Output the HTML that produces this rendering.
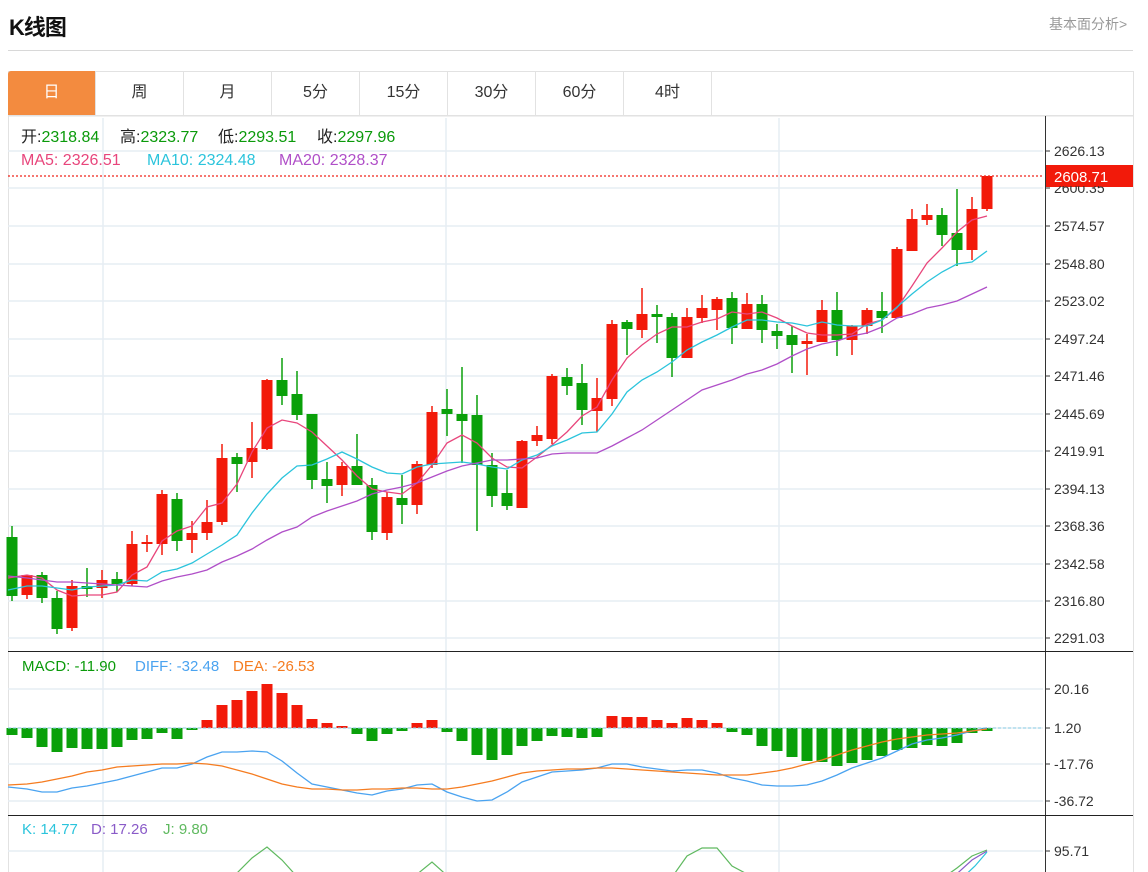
<!DOCTYPE html>
<html><head><meta charset="utf-8"><style>
body{margin:0;background:#fff;font-family:"Liberation Sans","Noto Sans CJK SC",sans-serif;}
.wrap{position:relative;width:1148px;height:872px;overflow:hidden}
h1{position:absolute;left:9px;top:10px;margin:0;font-size:22px;font-weight:bold;color:#111;letter-spacing:-1px}
.more{position:absolute;left:1049px;top:14px;font-size:14px;color:#999}
.hr{position:absolute;left:8px;top:50px;width:1125px;height:1px;background:#d8d8d8}
.box{position:absolute;left:8px;top:71px;width:1124px;height:810px;border:1px solid #e2e2e2;border-bottom:none}
.tabs{position:absolute;left:8px;top:71px;height:44px;display:flex;border-bottom:1px solid #e2e2e2;width:1125px}
.tabs div{width:87px;border-right:1px solid #e2e2e2;text-align:center;line-height:44px;font-size:16px;color:#333}
.tabs div.on{background:#f38b3f;color:#fff;border-radius:3px 0 0 0}
svg{position:absolute;left:0;top:0}
</style></head><body><div class="wrap">
<h1>K线图</h1><div class="more">基本面分析&gt;</div><div class="hr"></div>
<div class="box"></div>
<div class="tabs"><div class="on">日</div><div>周</div><div>月</div><div>5分</div><div>15分</div><div>30分</div><div>60分</div><div>4时</div></div>
<svg id="s" width="1148" height="872" font-family="Liberation Sans, Noto Sans CJK SC, sans-serif">
<g id="grid" stroke="#e6edf3" stroke-width="1.5"></g>
<line x1="8" y1="116" x2="1133" y2="116" stroke="#e2e2e2"/>
<line x1="1045.5" y1="116" x2="1045.5" y2="872" stroke="#333"/>
<line x1="8" y1="651.5" x2="1133" y2="651.5" stroke="#222"/>
<line x1="8" y1="815.5" x2="1133" y2="815.5" stroke="#222"/>
<g id="c"></g>
<line x1="8" y1="176" x2="1043" y2="176" stroke="#f0241a" stroke-width="1.2" stroke-dasharray="2,2"/>
<rect x="1046" y="165" width="87" height="22" fill="#f21a0a"/>
<g font-size="14" fill="#333">
<text x="1054" y="156">2626.13</text><text x="1054" y="193">2600.35</text>
<text x="1054" y="231">2574.57</text><text x="1054" y="269">2548.80</text>
<text x="1054" y="306">2523.02</text><text x="1054" y="344">2497.24</text>
<text x="1054" y="381">2471.46</text><text x="1054" y="419">2445.69</text>
<text x="1054" y="456">2419.91</text><text x="1054" y="494">2394.13</text>
<text x="1054" y="531">2368.36</text><text x="1054" y="569">2342.58</text>
<text x="1054" y="606">2316.80</text><text x="1054" y="643">2291.03</text>
<text x="1054" y="694">20.16</text><text x="1054" y="733">1.20</text>
<text x="1054" y="769">-17.76</text><text x="1054" y="806">-36.72</text>
<text x="1054" y="856">95.71</text>
</g>
<rect x="1046" y="176" width="87" height="10" fill="#f21a0a"/>
<text x="1054" y="182" font-size="15" fill="#fff">2608.71</text>
<g font-size="16">
<text x="21" y="142" fill="#222">开:<tspan fill="#0a9a0a">2318.84</tspan></text>
<text x="120" y="142" fill="#222">高:<tspan fill="#0a9a0a">2323.77</tspan></text>
<text x="218" y="142" fill="#222">低:<tspan fill="#0a9a0a">2293.51</tspan></text>
<text x="317" y="142" fill="#222">收:<tspan fill="#0a9a0a">2297.96</tspan></text>
<text x="21" y="165" fill="#e8467c">MA5: 2326.51</text>
<text x="147" y="165" fill="#2bc4dc">MA10: 2324.48</text>
<text x="279" y="165" fill="#b04fc8">MA20: 2328.37</text>
</g>
<g font-size="15">
<text x="22" y="671" fill="#0a9a0a">MACD: -11.90</text>
<text x="135" y="671" fill="#4aa3f0">DIFF: -32.48</text>
<text x="233" y="671" fill="#f57c20">DEA: -26.53</text>
<text x="22" y="834" fill="#2bc4dc">K: 14.77</text>
<text x="91" y="834" fill="#8a5bc8">D: 17.26</text>
<text x="163" y="834" fill="#5fb95f">J: 9.80</text>
</g>
</svg>
<script>
var ns="http://www.w3.org/2000/svg",C=document.getElementById('c'),G=document.getElementById('grid');
function el(t,a,p){var e=document.createElementNS(ns,t);for(var k in a)e.setAttribute(k,a[k]);(p||C).appendChild(e);return e;}
[151,188,226,264,301,339,376,414,451,489,526,564,601,638,689,728,764,801,851].forEach(function(y){el('line',{x1:8,x2:1043,y1:y,y2:y},G);
el('line',{x1:1045,x2:1050,y1:y,y2:y,stroke:'#333','stroke-width':1},G);});
[103,446,779].forEach(function(x){el('line',{x1:x,x2:x,y1:118,y2:872},G);});
var K=[['g',537,596,526,601],['r',575,595,575,599],['g',575,598,572,603],['g',598,629,591,634],['r',586,628,580,631],['g',586,589,568,597],['r',580,588,570,598],['g',579,584,572,592],['r',544,584,531,586],['r',542,544,535,552],['r',494,544,490,555],['g',499,541,493,551],['r',533,540,521,553],['r',522,533,500,540],['r',458,522,444,525],['g',457,464,453,492],['r',448,462,422,478],['r',380,449,379,450],['g',380,396,358,405],['g',394,415,371,420],['g',414,480,414,489],['g',479,486,462,503],['r',466,485,462,496],['g',466,485,434,485],['g',485,532,478,540],['r',497,533,492,540],['g',498,505,475,524],['r',464,505,461,514],['r',412,465,406,468],['g',409,414,389,436],['g',414,421,367,463],['g',415,465,395,531],['g',465,496,453,507],['g',493,506,470,510],['r',441,508,440,508],['r',435,441,426,446],['r',376,439,374,444],['g',377,386,368,395],['g',383,410,364,425],['r',398,411,378,432],['r',324,399,320,406],['g',322,329,320,355],['r',314,330,288,338],['g',314,317,305,343],['g',317,358,313,377],['r',317,358,308,358],['r',308,318,295,323],['r',299,310,297,330],['g',298,328,292,344],['r',304,329,293,329],['g',304,330,295,343],['g',331,336,324,349],['g',335,345,326,373],['r',341,344,334,375],['r',310,342,300,342],['g',310,340,292,356],['r',326,340,325,355],['r',310,326,308,334],['g',311,318,292,333],['r',249,318,247,318],['r',219,251,209,251],['r',215,220,204,225],['g',215,235,208,246],['g',233,250,189,266],['r',209,250,197,260],['r',176,209,176,211]];
var M=[7,10,19,24,20,21,21,19,12,11,5,11,2,-8,-23,-28,-37,-44,-35,-23,-9,-5,-2,6,13,6,3,-5,-8,4,13,27,32,27,18,13,8,9,10,9,-12,-11,-11,-8,-5,-10,-8,-5,4,7,18,23,29,33,34,38,35,32,28,22,20,17,18,15,5,3];
K.forEach(function(k,i){var x=12+15*i,c=k[0]=='r'?'#f21a0a':'#0aa00a';
el('line',{x1:x,x2:x,y1:k[3],y2:k[4],stroke:c,'stroke-width':1.5});
el('rect',{x:x-5.5,y:k[1],width:11,height:Math.max(2,k[2]-k[1]),fill:c});
var m=M[i];el('rect',{x:x-5.5,y:m<0?728+m:728,width:11,height:Math.abs(m)||1,fill:m<0?'#f21a0a':'#0aa00a'});});
el('line',{x1:8,x2:1043,y1:728,y2:728,stroke:'#8fd0e8','stroke-dasharray':'3,2'});
function L(ys,c){var p=ys.map(function(y,i){return (i==0?8:12+15*i)+','+y}).join(' ');el('polyline',{points:p,fill:'none',stroke:c,'stroke-width':1.3});}
L([578,575,578,590,596,595,595,592,575,567,541,531,526,507,503,484,452,428,420,423,432,446,460,476,489,492,494,483,465,443,435,443,458,467,468,457,445,432,416,407,380,358,345,334,327,327,322,319,312,314,312,318,326,333,335,335,334,324,320,308,286,263,248,232,220,216],'#e8467c');
L([590,586,586,588,590,587,586,585,580,581,572,569,563,554,545,535,513,494,478,466,465,459,452,459,467,473,474,467,464,463,462,464,467,469,460,455,446,440,433,432,414,392,380,372,362,350,342,335,327,320,320,322,323,326,322,325,326,326,320,307,294,282,272,264,262,251],'#2bc4dc');
L([576,578,580,582,582,583,584,585,586,587,581,577,574,570,562,556,549,540,532,527,517,511,506,501,494,490,487,483,477,471,466,463,460,460,459,458,454,453,453,453,446,438,430,420,410,400,390,385,380,374,370,364,356,349,344,341,336,333,327,318,314,308,305,301,294,287],'#b04fc8');
L([787,789,792,792,788,786,783,780,776,772,768,768,764,757,752,752,751,752,761,773,784,787,790,793,795,791,789,785,784,792,797,801,800,792,782,777,772,771,770,768,764,764,767,769,771,770,770,773,778,781,785,786,786,785,781,775,768,763,758,751,744,740,738,735,731,728],'#4aa3f0');
L([785,784,782,779,776,772,770,767,766,765,764,764,763,764,766,770,774,779,784,787,789,789,790,790,789,789,788,788,789,789,787,784,781,777,773,771,770,769,769,768,768,769,770,771,772,773,774,775,775,775,773,771,768,764,760,755,750,746,742,739,737,735,734,733,731,729],'#f57c20');
el('polyline',{points:'230,880 252,858 267,847 282,860 300,880',fill:'none',stroke:'#5fb95f','stroke-width':1.2});
el('polyline',{points:'410,880 432,862 452,880',fill:'none',stroke:'#5fb95f','stroke-width':1.2});
el('polyline',{points:'670,880 687,856 702,848 717,848 732,866 747,874',fill:'none',stroke:'#5fb95f','stroke-width':1.2});
el('polyline',{points:'940,880 957,868 972,856 987,850',fill:'none',stroke:'#5fb95f','stroke-width':1.2});
el('polyline',{points:'950,880 972,860 987,851',fill:'none',stroke:'#8a5bc8','stroke-width':1.2});
el('polyline',{points:'960,880 975,866 987,852',fill:'none',stroke:'#2bc4dc','stroke-width':1.2});
</script>
</div></body></html>
